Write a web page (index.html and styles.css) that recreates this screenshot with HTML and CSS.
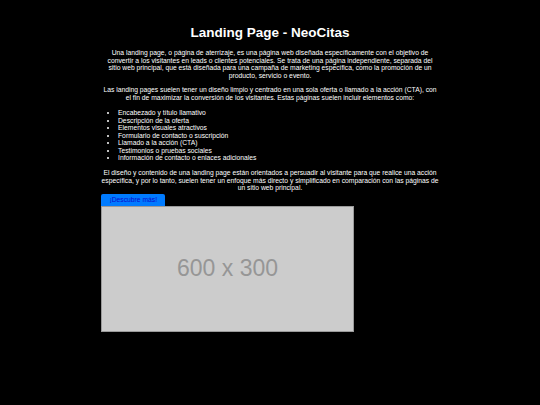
FILE: index.html
```html
<!DOCTYPE html>
<html lang="es">
<head>
<meta charset="utf-8">
<title>Landing Page - NeoCitas</title>
<link rel="stylesheet" href="styles.css">
</head>
<body>
<div class="container">
  <h1 class="title">Landing Page - NeoCitas</h1>
  <p class="text">Una landing page, o página de aterrizaje, es una página web diseñada específicamente con el objetivo de convertir a los visitantes en leads o clientes potenciales. Se trata de una página independiente, separada del sitio web principal, que está diseñada para una campaña de marketing específica, como la promoción de un producto, servicio o evento.</p>
  <p class="text">Las landing pages suelen tener un diseño limpio y centrado en una sola oferta o llamado a la acción (CTA), con el fin de maximizar la conversión de los visitantes. Estas páginas suelen incluir elementos como:</p>
  <ul class="list">
    <li>Encabezado y título llamativo</li>
    <li>Descripción de la oferta</li>
    <li>Elementos visuales atractivos</li>
    <li>Formulario de contacto o suscripción</li>
    <li>Llamado a la acción (CTA)</li>
    <li>Testimonios o pruebas sociales</li>
    <li>Información de contacto o enlaces adicionales</li>
  </ul>
  <p class="text last">El diseño y contenido de una landing page están orientados a persuadir al visitante para que realice una acción específica, y por lo tanto, suelen tener un enfoque más directo y simplificado en comparación con las páginas de un sitio web principal.</p>
  <div class="cta-row"><a class="cta" href="#">¡Descubre más!</a></div>
  <div class="placeholder"><span class="placeholder-label">600 x 300</span></div>
</div>
</body>
</html>
```
FILE: styles.css
```css
html, body {
  margin: 0;
  padding: 0;
  background: #000;
}
body {
  font-family: "Liberation Sans", Arial, sans-serif;
  color: #fff;
  font-size: 6.75px;
  line-height: 7.5px;
}
.container {
  width: 338px;
  margin: 0 auto;
  padding-top: 25px;
}
.title {
  font-size: 13.5px;
  font-weight: bold;
  text-align: center;
  margin: 0 0 8.25px;
  line-height: 16px;
}
.text {
  text-align: center;
  margin: 0 0 7px;
}
.list {
  margin: 8px 0 7.5px;
  padding-left: 17px;
}
.text.last {
  margin-bottom: 2.25px;
}
.cta-row {
  display: flex;
}
.cta {
  display: block;
  background: #007bff;
  color: #0a0acc;
  text-decoration: none;
  height: 12px;
  line-height: 12px;
  padding: 0 8.4px;
  border-radius: 2px 2px 0 0;
}
.placeholder {
  width: 253px;
  height: 126px;
  box-sizing: border-box;
  border: 1px solid #9a9a9a;
  background: #cccccc;
  display: flex;
  align-items: center;
  justify-content: center;
}
.placeholder-label {
  color: #969696;
  font-size: 23px;
}
```
